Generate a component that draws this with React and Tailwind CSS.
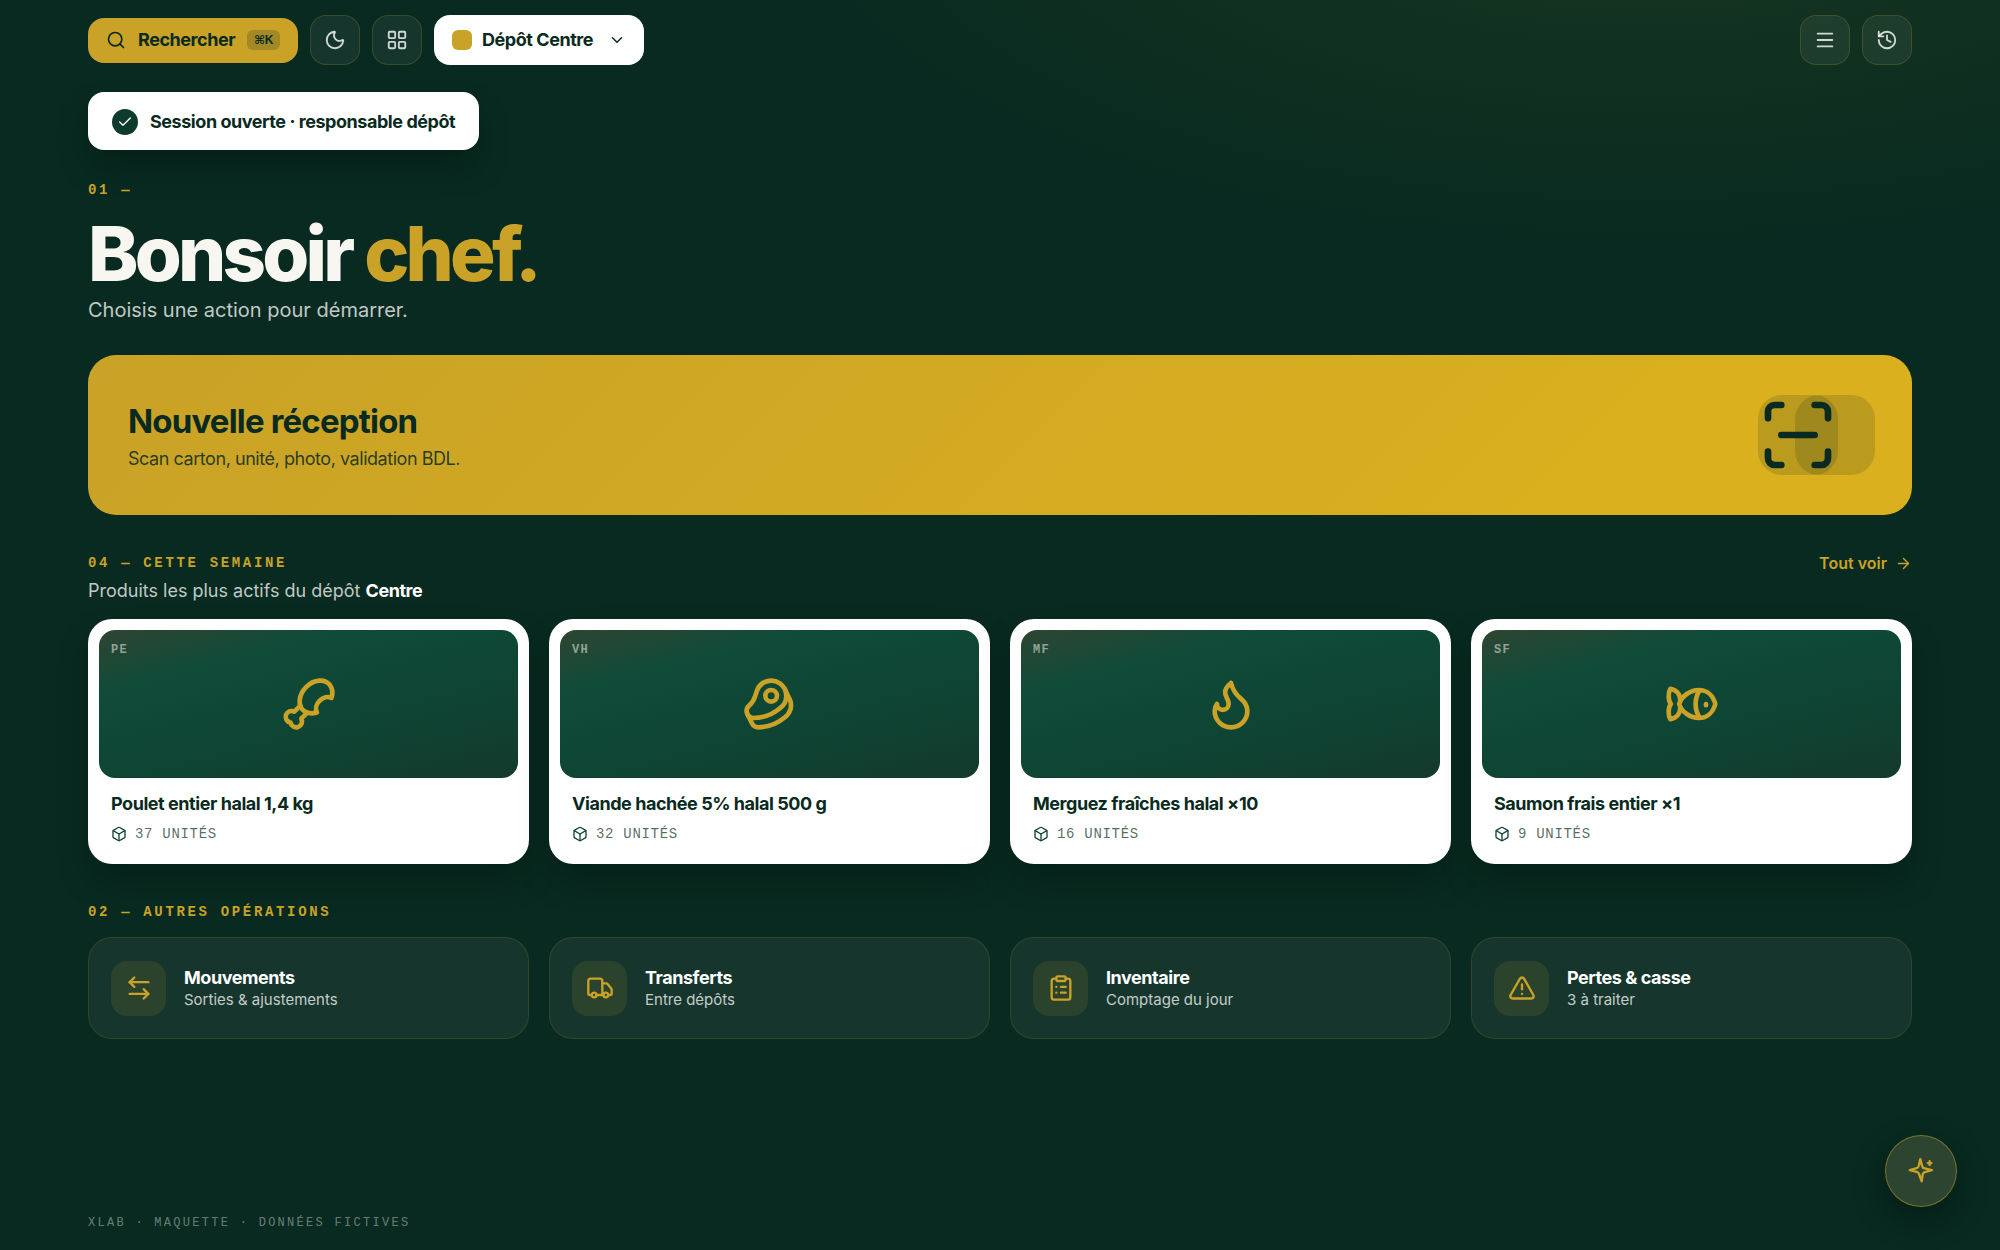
import {
  ArrowRight,
  Beef,
  Box,
  Check,
  ChevronDown,
  ClipboardList,
  Drumstick,
  Flame,
  History,
  LayoutGrid,
  Menu,
  Moon,
  ScanLine,
  Search,
  TriangleAlert,
  Truck,
} from "lucide-react";

const products = [
  { code: "PE", name: "Poulet entier halal 1,4 kg", units: 37, icon: Drumstick },
  { code: "VH", name: "Viande hachée 5% halal 500 g", units: 32, icon: Beef },
  { code: "MF", name: "Merguez fraîches halal ×10", units: 16, icon: Flame },
  { code: "SF", name: "Saumon frais entier ×1", units: 9, icon: FishIcon },
];

const operations = [
  { title: "Mouvements", text: "Sorties & ajustements", icon: SwapIcon },
  { title: "Transferts", text: "Entre dépôts", icon: Truck },
  { title: "Inventaire", text: "Comptage du jour", icon: ClipboardList },
  { title: "Pertes & casse", text: "3 à traiter", icon: TriangleAlert },
];

function LineIcon({ size = 24, children }) {
  return (
    <svg width={size} height={size} viewBox="0 0 24 24" fill="none" stroke="currentColor" strokeWidth="2" strokeLinecap="round" strokeLinejoin="round" aria-hidden="true">
      {children}
    </svg>
  );
}

function FishIcon({ size }) {
  return (
    <LineIcon size={size}>
      <path d="M6.5 12c.94-3.46 4.94-6 8.5-6 3.56 0 6.06 2.54 7 6-.94 3.47-3.44 6-7 6s-7.56-2.53-8.5-6Z" />
      <path d="M18 12v.5" />
      <path d="M15.2 17.8a11 11 0 0 1 0-11.6" />
      <path d="M7 10.67C7 8 5.58 5.97 2.73 5.5c-1 1.5-1 5 .23 6.5-1.24 1.5-1.24 5-.23 6.5C5.58 18.03 7 16 7 13.33" />
    </LineIcon>
  );
}

function SwapIcon({ size }) {
  return (
    <LineIcon size={size}>
      <path d="M20 7H4" />
      <path d="m8 3-4 4 4 4" />
      <path d="M4 17h16" />
      <path d="m16 21 4-4-4-4" />
    </LineIcon>
  );
}

function SparkIcon({ size }) {
  return (
    <LineIcon size={size}>
      <path d="M11.4 1.8 12.9 7.6Q13.4 9.4 15.2 9.8L21.4 11.2 15.2 12.9Q13.8 13.3 13.5 14.8L12.6 20.8 10.4 14.8Q10 13.3 8.4 12.8L2.4 11.2 8.2 9.6Q9.6 9.2 10 7.7Z" />
      <path d="M19.4 3.6v3.2M17.8 5.2h3.2" />
    </LineIcon>
  );
}

function IconButton({ label, icon: Icon }) {
  return (
    <button aria-label={label} className="flex size-[50px] items-center justify-center rounded-2xl border border-[#c9a227]/20 bg-white/6 text-white/80">
      <Icon size={22} />
    </button>
  );
}

function Eyebrow({ children }) {
  return <p className="font-['Liberation_Mono',monospace] text-sm font-bold tracking-[0.19em] text-[#c9a227] uppercase">{children}</p>;
}

function ProductCard({ product }) {
  const Icon = product.icon;
  return (
    <a href={`#${product.code}`} className="block rounded-3xl bg-white p-[11px] pb-5 shadow-[0_18px_32px_-8px_rgba(0,20,14,0.5)]">
      <div className="relative flex h-[148px] items-center justify-center rounded-2xl bg-[linear-gradient(165deg,#2e4531_0%,#114b39_24%,#0e4534_58%,#133a2d_100%)] text-[#c9a227]">
        <span className="absolute top-3 left-3 font-['Liberation_Mono',monospace] text-xs font-bold tracking-widest text-white/50">{product.code}</span>
        <Icon size={56} />
      </div>
      <div className="px-3 pt-[14px]">
        <h3 className="text-lg leading-6 font-bold tracking-tight">{product.name}</h3>
        <p className="mt-2 flex h-5 items-center gap-2 font-['Liberation_Mono',monospace] text-sm tracking-wider text-[#082a20]/70">
          <Box size={16} className="text-[#0f4634]" />
          {product.units} UNITÉS
        </p>
      </div>
    </a>
  );
}

function OperationCard({ operation }) {
  const Icon = operation.icon;
  return (
    <button className="flex h-[102px] items-center gap-[18px] rounded-3xl border border-[#c9a227]/15 bg-white/6 px-[22px] text-left">
      <span className="flex size-[55px] shrink-0 items-center justify-center rounded-2xl bg-[#c9a227]/12 text-[#c9a227]">
        <Icon size={28} />
      </span>
      <span className="flex flex-col">
        <span className="text-lg leading-6 font-bold tracking-tight text-white">{operation.title}</span>
        <span className="text-[15px] leading-5 text-white/75">{operation.text}</span>
      </span>
    </button>
  );
}

export default function App() {
  return (
    <div className="flex min-h-screen flex-col bg-[#082a20] bg-[radial-gradient(ellipse_880px_370px_at_82%_-120px,rgba(150,150,35,0.12),transparent)] px-[88px] font-['Inter',sans-serif] text-[#082a20]">
      <header className="flex items-center justify-between pt-[15px]">
        <div className="flex items-center gap-3">
          <button className="flex h-[45px] items-center gap-3 rounded-2xl bg-[#c9a227] px-[18px] text-lg font-bold tracking-tight">
            <Search size={20} />
            Rechercher
            <kbd className="flex h-5 items-center rounded-md bg-[#082a20]/20 px-[7px] font-['Liberation_Sans','DejaVu_Sans',sans-serif] text-xs font-bold">⌘K</kbd>
          </button>
          <IconButton label="Thème sombre" icon={Moon} />
          <IconButton label="Applications" icon={LayoutGrid} />
          <label className="relative flex h-[50px] items-center rounded-2xl bg-white">
            <span className="absolute left-[18px] size-5 rounded-md bg-[#c9a227]" />
            <select aria-label="Dépôt" className="h-full appearance-none rounded-2xl bg-transparent pr-[50px] pl-12 text-lg font-bold tracking-tight">
              <option>Dépôt Centre</option>
            </select>
            <ChevronDown size={18} className="pointer-events-none absolute right-[18px]" />
          </label>
        </div>
        <div className="flex gap-3">
          <IconButton label="Menu" icon={Menu} />
          <IconButton label="Historique" icon={History} />
        </div>
      </header>

      <main>
        <div role="status" className="mt-[27px] flex h-[58px] w-fit items-center gap-3 rounded-2xl bg-white px-6 pt-px text-lg font-bold tracking-tight shadow-[0_18px_32px_-8px_rgba(0,20,14,0.5)]">
          <span className="flex size-[26px] items-center justify-center rounded-full bg-[#0d3b2e] text-white">
            <Check size={16} />
          </span>
          Session ouverte · responsable dépôt
        </div>

        <section className="mt-[30px]">
          <Eyebrow>01 —</Eyebrow>
          <h1 className="mt-[14px] text-[76px] leading-[78px] font-extrabold tracking-tighter text-[#f8f6f0]">
            Bonsoir <span className="text-[#c9a227]">chef.</span>
          </h1>
          <p className="mt-1 text-xl leading-7 text-white/75">Choisis une action pour démarrer.</p>
        </section>

        <button className="mt-[31px] flex h-40 w-full items-center justify-between rounded-[28px] bg-[linear-gradient(135deg,#c9a227,#dab01e_85%)] pr-[37px] pl-10 text-left">
          <span className="flex flex-col pt-1">
            <span className="text-[33px] leading-10 font-bold tracking-tight">Nouvelle réception</span>
            <span className="mt-1 text-lg leading-7 tracking-tight text-[#082a20]/85">Scan carton, unité, photo, validation BDL.</span>
          </span>
          <span className="relative size-20 rounded-3xl bg-[#082a20]/15">
            <ScanLine size={80} className="absolute top-0 right-[37px] rounded-3xl bg-[#082a20]/15" />
          </span>
        </button>

        <section className="mt-[38px]">
          <div className="flex items-center justify-between">
            <Eyebrow>04 — Cette semaine</Eyebrow>
            <a href="#produits" className="flex items-center gap-2 text-base leading-5 font-semibold text-[#c9a227]">
              Tout voir
              <ArrowRight size={17} />
            </a>
          </div>
          <p className="mt-1 text-lg leading-7 text-white/75">
            Produits les plus actifs du dépôt <strong className="font-bold tracking-tight text-white">Centre</strong>
          </p>
          <div className="mt-[14px] grid grid-cols-4 gap-5">
            {products.map((product) => (
              <ProductCard key={product.code} product={product} />
            ))}
          </div>
        </section>

        <section className="mt-[38px]">
          <Eyebrow>02 — Autres opérations</Eyebrow>
          <div className="mt-[15px] grid grid-cols-4 gap-5">
            {operations.map((operation) => (
              <OperationCard key={operation.title} operation={operation} />
            ))}
          </div>
        </section>
      </main>

      <footer className="mt-auto pb-[19px] font-['Liberation_Mono',monospace] text-xs tracking-[0.19em] text-white/40">XLAB · MAQUETTE · DONNÉES FICTIVES</footer>

      <button aria-label="Assistant" className="fixed right-[43px] bottom-[43px] flex size-[72px] items-center justify-center rounded-full border border-[#c9a227]/50 bg-[#2c4430] text-[#c9a227] shadow-[0_12px_28px_rgba(0,20,14,0.5)]">
        <SparkIcon size={28} />
      </button>
    </div>
  );
}
